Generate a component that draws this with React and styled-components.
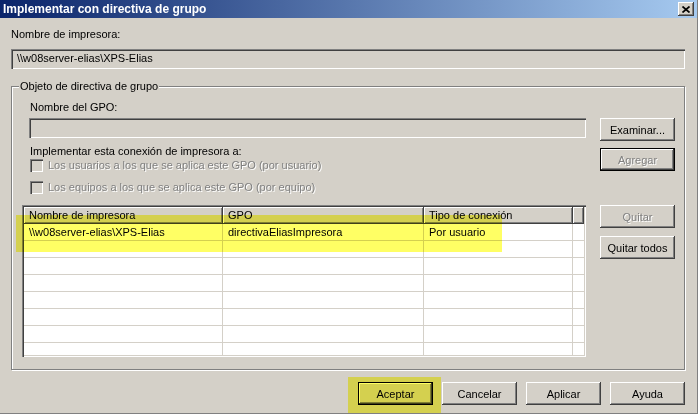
import React from 'react';
import styled, { createGlobalStyle, css } from 'styled-components';

const GlobalStyle = createGlobalStyle`
  html, body {
    margin: 0;
    padding: 0;
    background: #d4d0c8;
  }
  body {
    font-family: 'Liberation Sans', Arial, sans-serif;
    font-size: 11px;
    color: #000;
  }
`

const raised = css`
  box-shadow: inset -1px -1px #404040, inset 1px 1px #fff, inset -2px -2px #808080, inset 2px 2px #d4d0c8;
`
const sunken = css`
  box-shadow: inset 1px 1px #808080, inset 2px 2px #404040, inset -1px -1px #fff, inset -2px -2px #d4d0c8;
`
const disabledText = css`
  color: #808080;
  text-shadow: 1px 1px #fff;
`

const Window = styled.div`
  position: relative;
  box-sizing: border-box;
  width: 698px;
  height: 414px;
  background: #d4d0c8;
  border-right: 1px solid #808080;
  border-bottom: 1px solid #808080;
  overflow: hidden;
`
const TitleBar = styled.div`
  display: flex;
  align-items: center;
  justify-content: space-between;
  height: 18px;
  padding: 0 3px 0 3px;
  background: linear-gradient(to right, #0a246a, #a6caf0);
`
const Title = styled.div`
  color: #fff;
  font-weight: bold;
  font-size: 12px;
  line-height: 18px;
`
const CloseButton = styled.div`
  display: flex;
  align-items: center;
  justify-content: center;
  width: 16px;
  height: 14px;
  background: #d4d0c8;
  ${raised}
`
const Content = styled.div`
  padding: 0 12px 0 11px;
`
const Label = styled.div`
  line-height: 13px;
  margin-top: ${p => p.$top || 0}px;
  padding-left: ${p => p.$indent || 0}px;
  white-space: nowrap;
`
const TextBox = styled.div`
  box-sizing: border-box;
  height: 20px;
  margin-top: ${p => p.$top || 0}px;
  margin-left: ${p => p.$indent || 0}px;
  padding: 3px 6px;
  line-height: 13px;
  background: #d4d0c8;
  ${sunken}
`
const Group = styled.fieldset`
  margin: 11px 0 0 0;
  padding: 8px 9px 12px 10px;
  min-width: 0;
  border: 1px solid #808080;
  box-shadow: inset 1px 1px #fff, 1px 1px #fff;
`
const Legend = styled.legend`
  margin-left: -3px;
  padding: 0 1px;
  line-height: 13px;
  background: #d4d0c8;
`
const GroupGrid = styled.div`
  display: grid;
  grid-template-columns: 1fr 75px;
  column-gap: 14px;
`
const Column = styled.div`
  display: flex;
  flex-direction: column;
  min-width: 0;
`
const CheckRow = styled.div`
  display: flex;
  align-items: center;
  gap: 5px;
  height: 13px;
  margin-top: ${p => p.$top || 0}px;
  padding-left: 8px;
  line-height: 13px;
  ${disabledText}
`
const CheckBox = styled.span`
  flex: none;
  width: 13px;
  height: 13px;
  background: #d4d0c8;
  ${sunken}
`
const Button = styled.button`
  flex: none;
  width: 75px;
  height: 23px;
  margin-top: ${p => p.$top || 0}px;
  padding: 0;
  border: none;
  font: inherit;
  font-size: 11px;
  background: #d4d0c8;
  color: #000;
  ${raised}
  ${p => p.disabled && disabledText}
  ${p => p.$default && css`
    box-shadow: inset 0 0 0 1px #000, inset -2px -2px #404040, inset 2px 2px #fff, inset -3px -3px #808080;
  `}
`
const cols = '199px 201px 149px 11px'

const ListView = styled.div`
  box-sizing: border-box;
  height: 152px;
  margin-top: 11px;
  padding: 2px;
  background: #fff;
  ${sunken}
`
const ListInner = styled.div`
  height: 148px;
  overflow: hidden;
`
const HeaderRow = styled.div`
  display: grid;
  grid-template-columns: ${cols};
`
const HeaderCell = styled.div`
  height: 17px;
  padding-left: 5px;
  line-height: 17px;
  white-space: nowrap;
  overflow: hidden;
  background: #d4d0c8;
  ${raised}
`
const Row = styled.div`
  display: grid;
  grid-template-columns: ${cols};
  height: 17px;
  box-sizing: border-box;
  border-bottom: 1px solid #d4d0c8;
`
const Cell = styled.div`
  padding-left: 5px;
  line-height: 16px;
  white-space: nowrap;
  border-right: ${p => p.$last ? 'none' : '1px solid #d4d0c8'};
`
const Footer = styled.div`
  display: flex;
  justify-content: flex-end;
  gap: 9px;
  margin-top: 12px;
`
const Highlight = styled.div`
  position: absolute;
  background: #ffff64;
  mix-blend-mode: multiply;
  pointer-events: none;
`

const rows = [
  ['\\\\w08server-elias\\XPS-Elias', 'directivaEliasImpresora', 'Por usuario'],
  ['', '', ''], ['', '', ''], ['', '', ''], ['', '', ''], ['', '', ''], ['', '', ''], ['', '', ''],
]

const App = () => {
  return (
    <>
      <GlobalStyle />
      <Window>
        <TitleBar>
          <Title>Implementar con directiva de grupo</Title>
          <CloseButton>
            <svg width="8" height="7" viewBox="0 0 8 7">
              <path d="M0.5 0.5 L7.5 6.5 M7.5 0.5 L0.5 6.5" stroke="#000" strokeWidth="1.7" fill="none" />
            </svg>
          </CloseButton>
        </TitleBar>
        <Content>
          <Label $top={10}>Nombre de impresora:</Label>
          <TextBox $top={8}>\\w08server-elias\XPS-Elias</TextBox>
          <Group>
            <Legend>Objeto de directiva de grupo</Legend>
            <GroupGrid>
              <Column>
                <Label $indent={8}>Nombre del GPO:</Label>
                <TextBox $top={4} $indent={7} />
                <Label $top={7} $indent={8}>Implementar esta conexión de impresora a:</Label>
                <CheckRow $top={1}><CheckBox />Los usuarios a los que se aplica este GPO (por usuario)</CheckRow>
                <CheckRow $top={9}><CheckBox />Los equipos a los que se aplica este GPO (por equipo)</CheckRow>
                <ListView>
                  <ListInner>
                    <HeaderRow>
                      <HeaderCell>Nombre de impresora</HeaderCell>
                      <HeaderCell>GPO</HeaderCell>
                      <HeaderCell>Tipo de conexión</HeaderCell>
                      <HeaderCell />
                    </HeaderRow>
                    {rows.map((r, i) => (
                      <Row key={i}>
                        <Cell>{r[0]}</Cell>
                        <Cell>{r[1]}</Cell>
                        <Cell>{r[2]}</Cell>
                        <Cell $last />
                      </Row>
                    ))}
                  </ListInner>
                </ListView>
              </Column>
              <Column>
                <Button $top={17}>Examinar...</Button>
                <Button $top={7} $default disabled>Agregar</Button>
                <Button $top={34} disabled>Quitar</Button>
                <Button $top={8}>Quitar todos</Button>
              </Column>
            </GroupGrid>
          </Group>
          <Footer>
            <Button $default>Aceptar</Button>
            <Button>Cancelar</Button>
            <Button>Aplicar</Button>
            <Button>Ayuda</Button>
          </Footer>
        </Content>
        <Highlight style={{ left: 16, top: 215, width: 486, height: 37 }} />
        <Highlight style={{ left: 348, top: 377, width: 93, height: 36 }} />
      </Window>
    </>
  )
}

export default App;
